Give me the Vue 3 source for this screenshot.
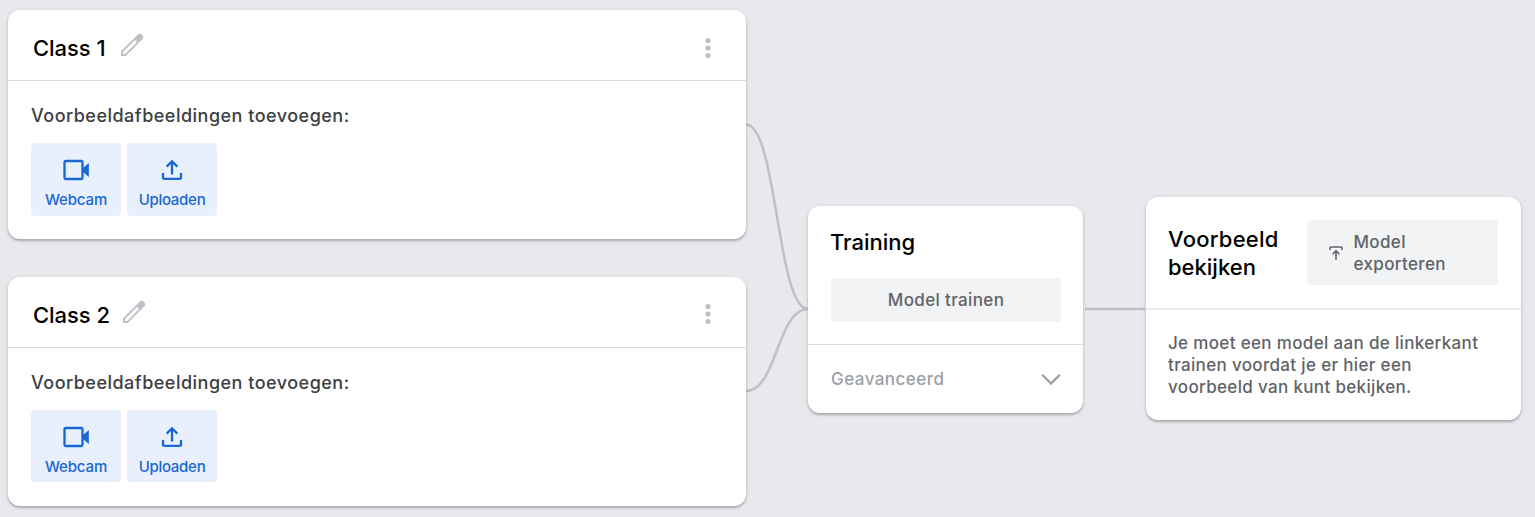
<script setup>
const classes = ['Class 1', 'Class 2']
</script>

<template>
  <main class="board">
    <svg class="links" width="1535" height="517" viewBox="0 0 1535 517">
      <path d="M746 124.500C777 124.500 777 309 808 309" />
      <path d="M746 391C777 391 777 309 808 309" />
      <path d="M1085 309H1145" />
    </svg>

    <section class="classes">
      <article v-for="name in classes" :key="name" class="card">
        <header class="class-head">
          <h2>{{ name }}</h2>
          <svg class="pencil" width="24" height="24" viewBox="0 0 24 24">
            <path fill-rule="evenodd" d="M1 18.300V23H5.700L22.100 6.600A3.300 3.300 0 0 0 17.400 1.900ZM3 21V19L15 7L17 9L5 21Z" />
          </svg>
          <svg class="more" width="6" height="22" viewBox="0 0 6 22">
            <circle cx="3" cy="3.500" r="2.600" /><circle cx="3" cy="11" r="2.600" /><circle cx="3" cy="18.500" r="2.600" />
          </svg>
        </header>
        <div class="class-body">
          <p class="add">Voorbeeldafbeeldingen toevoegen:</p>
          <div class="actions">
            <button>
              <svg width="28" height="22" viewBox="0 0 28 22">
                <rect x="2.500" y="2" width="18" height="18" rx="1.200" fill="none" stroke="#1967d2" stroke-width="2.300" />
                <path d="M20.500 9.500L26.800 4V18L20.500 12.500Z" fill="#1967d2" />
              </svg>
              <span>Webcam</span>
            </button>
            <button>
              <svg width="22" height="22" viewBox="0 0 22 22" fill="none" stroke="#1967d2" stroke-width="2.300">
                <path d="M11 15.500V2.500M5.700 7.600L11 2.300L16.300 7.600M2 14V18.200Q2 19.800 3.600 19.800H18.400Q20 19.800 20 18.200V14" />
              </svg>
              <span class="upload">Uploaden</span>
            </button>
          </div>
        </div>
      </article>
    </section>

    <section class="card training">
      <div class="train-top">
        <h2>Training</h2>
        <button class="grey">Model trainen</button>
      </div>
      <div class="advanced">
        <span>Geavanceerd</span>
        <svg width="20" height="13" viewBox="0 0 20 13"><path d="M1.200 1.800L10 10.600L18.800 1.800" /></svg>
      </div>
    </section>

    <section class="card preview">
      <header class="preview-head">
        <h2><span class="wide">Voorbeeld</span><br>bekijken</h2>
        <button class="grey export">
          <svg width="14" height="14" viewBox="0 0 14 14"><path d="M1 4V1.800Q1 1 1.800 1H12.200Q13 1 13 1.800V4M7 14V5M3.600 8.200L7 4.800L10.400 8.200" /></svg>
          <span>Model<br>exporteren</span>
        </button>
      </header>
      <p class="hint">Je moet een model aan de linkerkant<br>trainen voordat je er hier een<br>voorbeeld van kunt bekijken.</p>
    </section>
  </main>
</template>

<style>
body { background: #e8e9ed; }
</style>

<style scoped>
.board { position: relative; box-sizing: border-box; width: 1535px; height: 517px; overflow: hidden; padding: 10px 8px 0; display: flex; align-items: flex-start; background: #e8e9ed; font-family: Inter, "Open Sans", sans-serif; font-weight: 500; }
.links { position: absolute; left: 0; top: 0; fill: none; stroke: #bdc1c6; stroke-width: 2.500; }
.card { position: relative; box-sizing: border-box; background: #fff; border-radius: 12px; box-shadow: 0 2px 2px rgba(60, 64, 67, .28), 0 1px 4px rgba(60, 64, 67, .16); }
h2, p { margin: 0; font-weight: 500; }
h2 { font-size: 22px; line-height: 28px; color: #000; }
button { border: 0; padding: 0; border-radius: 4px; font: inherit; }
.classes { width: 738px; display: flex; flex-direction: column; gap: 38px; }
.classes .card { height: 229px; }
.class-head { box-sizing: border-box; height: 71px; padding: 5px 35px 0 25px; display: flex; align-items: center; border-bottom: 1px solid #dadce0; }
.class-head h2 { letter-spacing: -.05px; }
.pencil { margin: -5px 0 0 14px; fill: #bdc1c6; }
.card + .card .pencil { margin-left: 12px; }
.card + .card .more { margin-top: -2px; }
.more { margin-left: auto; fill: #bdc1c6; }
.class-body { padding: 23px 23px 0; }
.add { font-size: 18px; line-height: 24px; letter-spacing: .49px; color: #3c4043; }
.actions { margin-top: 15px; display: flex; gap: 6px; }
.actions button { box-sizing: border-box; width: 90px; height: 73px; background: #e8f0fe; color: #1967d2; display: flex; flex-direction: column; align-items: center; padding-top: 16px; gap: 9px; font-size: 15px; line-height: 20px; letter-spacing: -.15px; }
.card + .card .actions button { height: 72px; }
.actions .upload { letter-spacing: -.28px; }
.training { width: 275px; height: 207px; margin: 195.500px 0 0 62px; }
.train-top { box-sizing: border-box; height: 139.500px; padding: 22.500px 22px 0 23px; border-bottom: 1px solid #dadce0; }
.train-top h2 { margin-left: -1px; }
.grey { background: #f1f3f4; color: #5f6368; font-size: 17px; line-height: 22px; letter-spacing: .36px; }
.train-top .grey { width: 100%; height: 44px; margin-top: 22px; display: block; }
.advanced { height: 68px; padding: 0 22px 0 23px; display: flex; align-items: center; justify-content: space-between; font-size: 17px; letter-spacing: .46px; color: #9aa0a6; }
.advanced svg { fill: none; stroke: #9aa0a6; stroke-width: 2.300; }
.preview { width: 375px; height: 223px; margin: 187.400px 0 0 63px; }
.preview-head { box-sizing: border-box; height: 112.500px; padding: 23px 23px 0 22px; display: flex; justify-content: space-between; align-items: flex-start; border-bottom: 2px solid #e8eaed; }
.preview-head h2 { padding-top: 5px; }
.wide { letter-spacing: .25px; }
.export { box-sizing: border-box; width: 191px; height: 65px; padding-left: 22px; display: flex; align-items: center; gap: 10.500px; text-align: left; }
.export svg { fill: none; stroke: #5f6368; stroke-width: 1.500; }
.hint { padding: 22px 22px 0; font-size: 17px; line-height: 22px; letter-spacing: .34px; white-space: nowrap; color: #5f6368; }
</style>
